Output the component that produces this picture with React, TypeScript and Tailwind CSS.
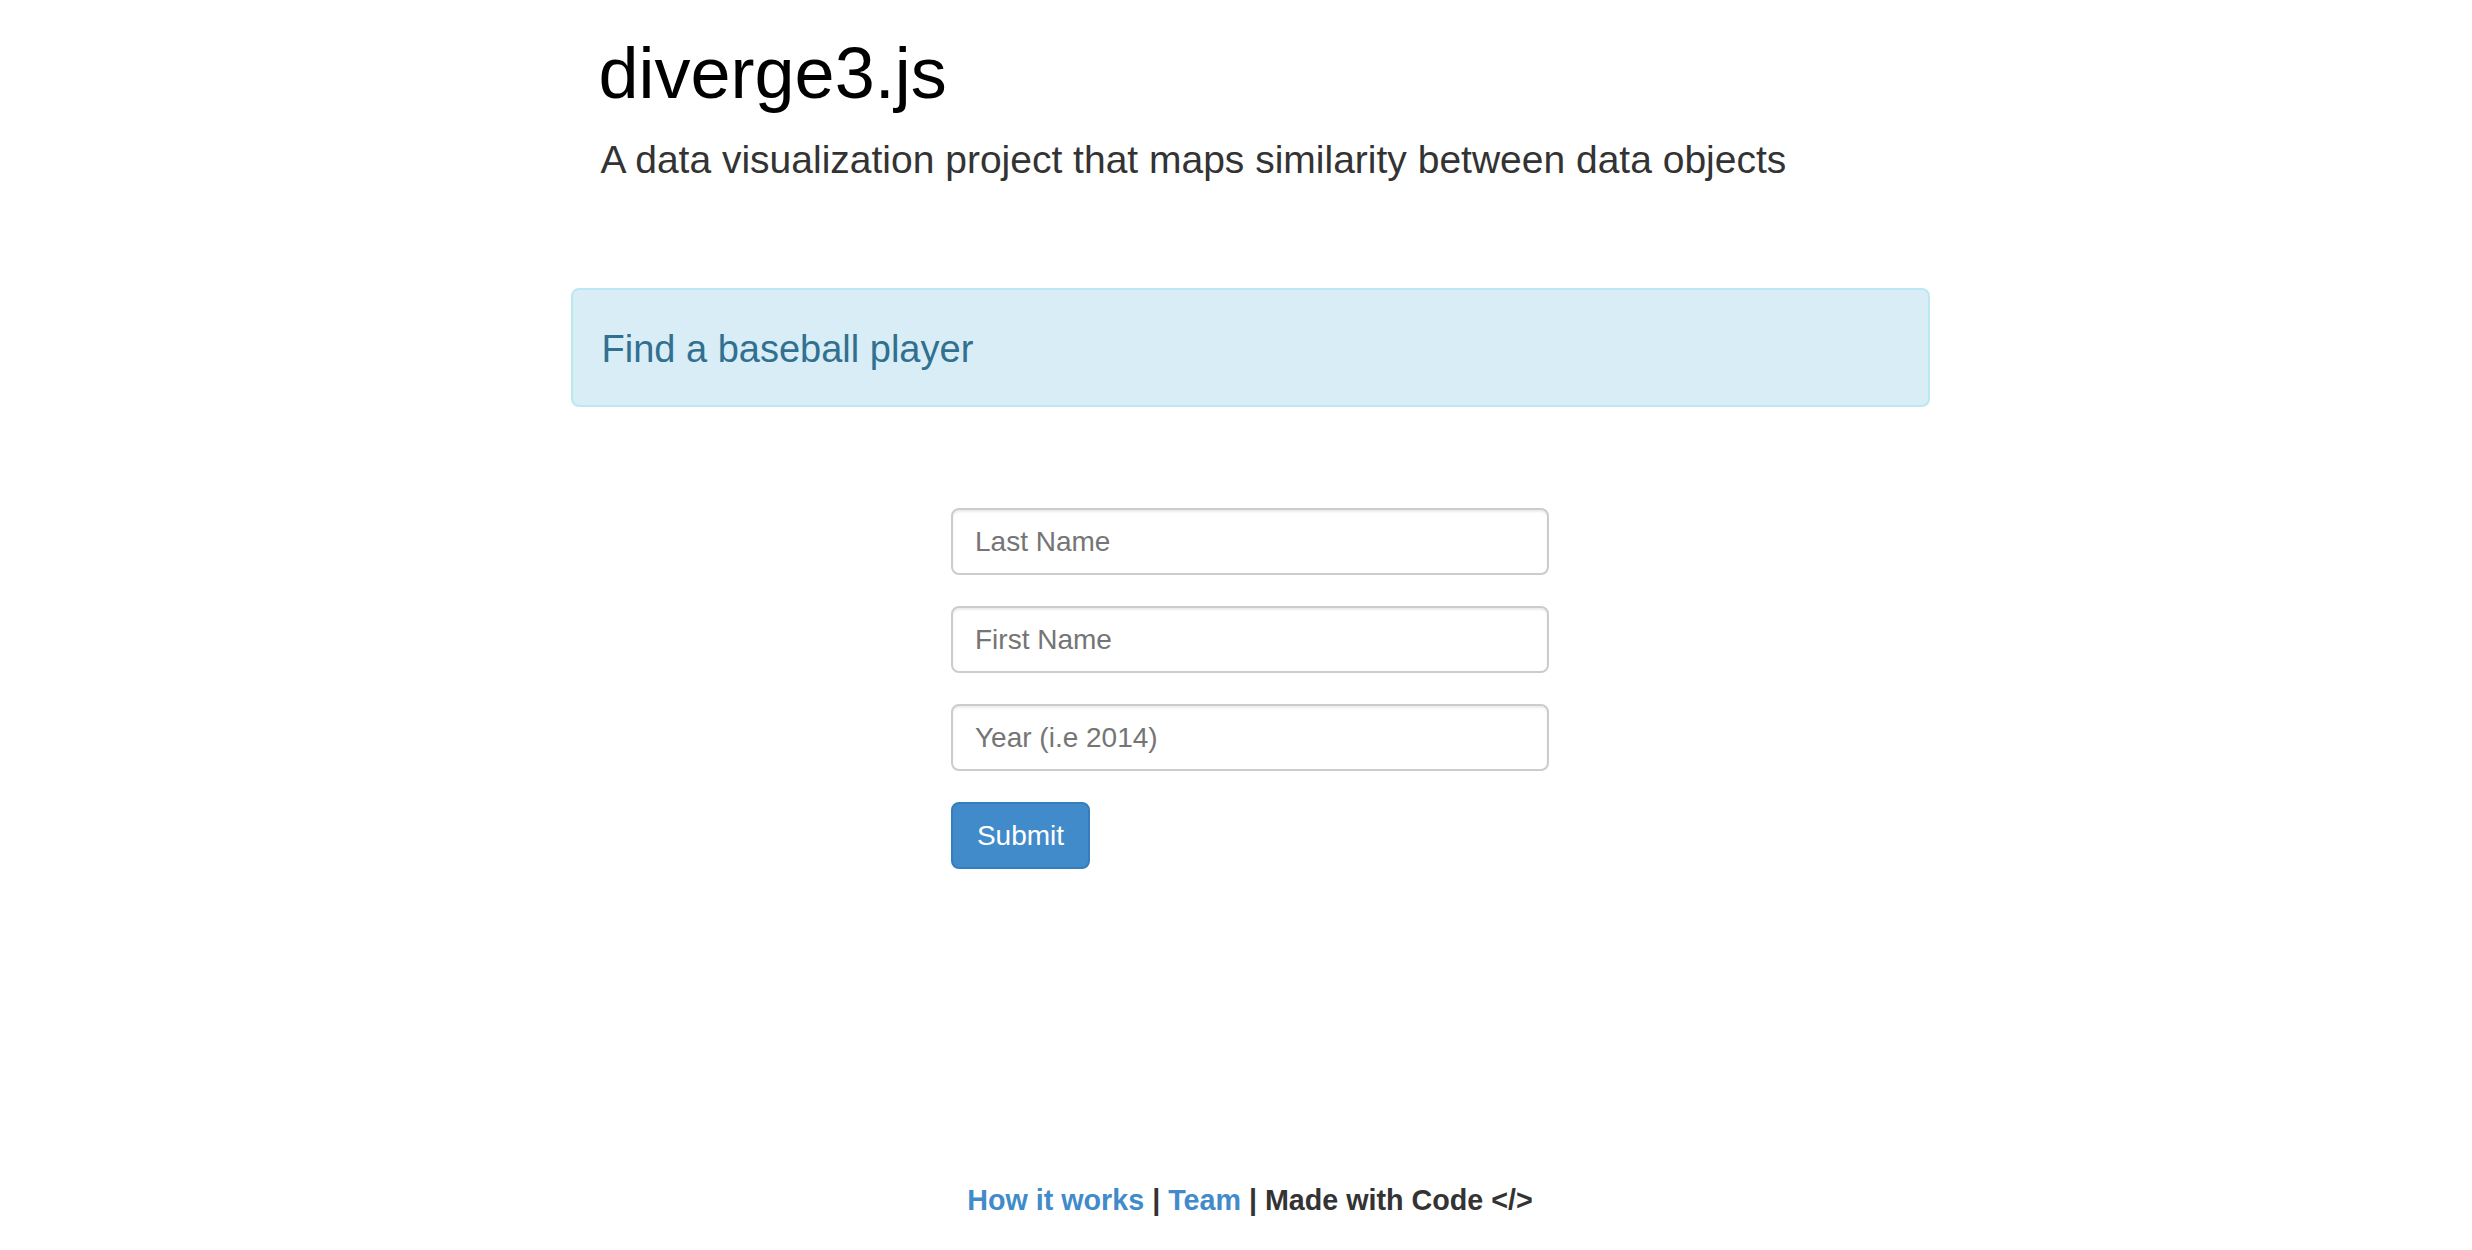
import React from "react";

export default function App() {
  return (
    <div
      className="min-h-[1250px] w-full bg-white pl-[28px]"
      style={{ fontFamily: '"Liberation Sans", Arial, Helvetica, sans-serif' }}
    >
      <div className="mx-auto flex w-[1359px] flex-col">
        <h1 className="mt-[33px] pl-[28px] text-[72px] leading-[80px] font-normal text-black">
          diverge3.js
        </h1>
        <p className="mt-[25px] pl-[30px] text-[39px] leading-[44px] text-[#333333]">
          A data visualization project that maps similarity between data objects
        </p>

        <div className="mt-[106px] rounded-[8px] border-2 border-[#bce8f1] bg-[#d9edf7] pt-[37px] pb-[34px] pl-[29px]">
          <div className="text-[38px] leading-[44px] text-[#31708f]">Find a baseball player</div>
        </div>

        <form
          className="mt-[101px] flex w-[598px] flex-col self-center"
          onSubmit={(e) => e.preventDefault()}
        >
          <input
            type="text"
            placeholder="Last Name"
            className="h-[67px] w-full rounded-[8px] border-2 border-[#cccccc] bg-white px-[22px] text-[28px] text-[#555] shadow-[inset_0_2px_2px_rgba(0,0,0,0.075)] outline-none placeholder:text-[#757575]"
          />
          <input
            type="text"
            placeholder="First Name"
            className="mt-[31px] h-[67px] w-full rounded-[8px] border-2 border-[#cccccc] bg-white px-[22px] text-[28px] text-[#555] shadow-[inset_0_2px_2px_rgba(0,0,0,0.075)] outline-none placeholder:text-[#757575]"
          />
          <input
            type="text"
            placeholder="Year (i.e 2014)"
            className="mt-[31px] h-[67px] w-full rounded-[8px] border-2 border-[#cccccc] bg-white px-[22px] text-[28px] text-[#555] shadow-[inset_0_2px_2px_rgba(0,0,0,0.075)] outline-none placeholder:text-[#757575]"
          />
          <div className="mt-[31px] flex">
            <button
              type="submit"
              className="h-[67px] w-[139px] rounded-[8px] border-2 border-[#357ebd] bg-[#428bca] text-[28px] text-white"
            >
              Submit
            </button>
          </div>
        </form>

        <div className="mt-[311px] text-center text-[28.7px] leading-[40px] font-bold text-[#333333]">
          <a href="#" className="text-[#428bca]">How it works</a>
          <span> | </span>
          <a href="#" className="text-[#428bca]">Team</a>
          <span> | Made with Code &lt;/&gt;</span>
        </div>
      </div>
    </div>
  );
}
